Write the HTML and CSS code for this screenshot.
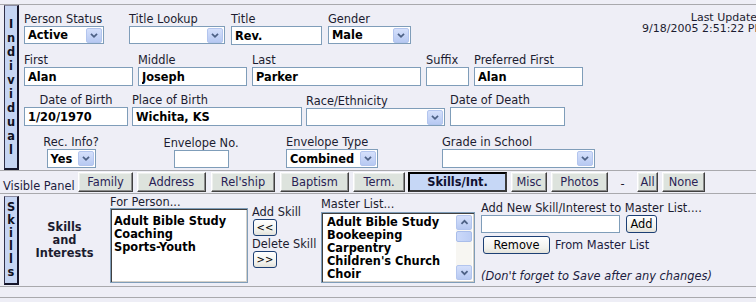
FILE: index.html
```html
<!DOCTYPE html>
<html>
<head>
<meta charset="utf-8">
<title>Individual</title>
<link rel="stylesheet" href="styles.css">
</head>
<body>
<div class="page">
  <div class="rule"></div>

  <section class="panel ind">
    <div class="vtab ind-tab">
      <span>I</span><span>n</span><span>d</span><span>i</span><span>v</span><span>i</span><span>d</span><span>u</span><span>a</span><span>l</span>
    </div>
    <div class="content">
      <div class="row r1">
        <div class="fld c-status">
          <label>Person Status</label>
          <div class="sel sel-status"><span class="val">Active</span><span class="arr"><svg viewBox="0 0 16 15" width="16" height="15"><path d="M4.5 5.5 L8 9 L11.5 5.5" fill="none" stroke="#4d6185" stroke-width="2"/></svg></span></div>
        </div>
        <div class="fld c-tlookup">
          <label>Title Lookup</label>
          <div class="sel sel-tlookup"><span class="val"></span><span class="arr"><svg viewBox="0 0 16 15" width="16" height="15"><path d="M4.5 5.5 L8 9 L11.5 5.5" fill="none" stroke="#4d6185" stroke-width="2"/></svg></span></div>
        </div>
        <div class="fld c-title">
          <label>Title</label>
          <input class="inp inp-title" value="Rev.">
        </div>
        <div class="fld c-gender">
          <label>Gender</label>
          <div class="sel sel-gender"><span class="val">Male</span><span class="arr"><svg viewBox="0 0 16 15" width="16" height="15"><path d="M4.5 5.5 L8 9 L11.5 5.5" fill="none" stroke="#4d6185" stroke-width="2"/></svg></span></div>
        </div>
        <div class="updated">Last Updated<br>9/18/2005 2:51:22 PM</div>
      </div>

      <div class="row r2">
        <div class="fld"><label>First</label><input class="inp inp-first" value="Alan"></div>
        <div class="fld"><label>Middle</label><input class="inp inp-middle" value="Joseph"></div>
        <div class="fld"><label>Last</label><input class="inp inp-last" value="Parker"></div>
        <div class="fld"><label>Suffix</label><input class="inp inp-suffix" value=""></div>
        <div class="fld"><label>Preferred First</label><input class="inp inp-pref" value="Alan"></div>
      </div>

      <div class="row r3">
        <div class="fld center c-dob"><label>Date of Birth</label><input class="inp inp-dob" value="1/20/1970"></div>
        <div class="fld c-pob"><label>Place of Birth</label><input class="inp inp-pob" value="Wichita, KS"></div>
        <div class="fld c-race">
          <label>Race/Ethnicity</label>
          <div class="sel sel-race"><span class="val"></span><span class="arr"><svg viewBox="0 0 16 15" width="16" height="15"><path d="M4.5 5.5 L8 9 L11.5 5.5" fill="none" stroke="#4d6185" stroke-width="2"/></svg></span></div>
        </div>
        <div class="fld"><label>Date of Death</label><input class="inp inp-dod" value=""></div>
      </div>

      <div class="row r4">
        <div class="fld center c-rec">
          <label>Rec. Info?</label>
          <div class="sel sel-rec"><span class="val">Yes</span><span class="arr"><svg viewBox="0 0 16 15" width="16" height="15"><path d="M4.5 5.5 L8 9 L11.5 5.5" fill="none" stroke="#4d6185" stroke-width="2"/></svg></span></div>
        </div>
        <div class="fld center c-env"><label>Envelope No.</label><input class="inp inp-env" value=""></div>
        <div class="fld c-envtype">
          <label>Envelope Type</label>
          <div class="sel sel-envtype"><span class="val">Combined</span><span class="arr"><svg viewBox="0 0 16 15" width="16" height="15"><path d="M4.5 5.5 L8 9 L11.5 5.5" fill="none" stroke="#4d6185" stroke-width="2"/></svg></span></div>
        </div>
        <div class="fld">
          <label>Grade in School</label>
          <div class="sel sel-grade"><span class="val"></span><span class="arr"><svg viewBox="0 0 16 15" width="16" height="15"><path d="M4.5 5.5 L8 9 L11.5 5.5" fill="none" stroke="#4d6185" stroke-width="2"/></svg></span></div>
        </div>
      </div>
    </div>
  </section>

  <div class="rule"></div>

  <nav class="vis-row">
    <span class="vis-label">Visible Panel</span>
    <button class="tbtn b-family">Family</button>
    <button class="tbtn b-address">Address</button>
    <button class="tbtn b-rel">Rel'ship</button>
    <button class="tbtn b-bapt">Baptism</button>
    <button class="tbtn b-term">Term.</button>
    <button class="tbtn active b-skills">Skills/Int.</button>
    <button class="tbtn b-misc">Misc</button>
    <button class="tbtn b-photos">Photos</button>
    <span class="dash">-</span>
    <button class="tbtn b-all">All</button>
    <button class="tbtn b-none">None</button>
  </nav>

  <div class="rule"></div>

  <section class="panel skills">
    <div class="vtab sk-tab">
      <span>S</span><span>k</span><span>i</span><span>l</span><span>l</span><span>s</span>
    </div>
    <div class="sk-title">Skills<br>and<br>Interests</div>
    <div class="sk-col sk-person">
      <label>For Person...</label>
      <div class="listbox lb-person">
        <div>Adult Bible Study</div>
        <div>Coaching</div>
        <div>Sports-Youth</div>
      </div>
    </div>
    <div class="sk-col sk-move">
      <label>Add Skill</label>
      <button class="xbtn mv">&lt;&lt;</button>
      <label>Delete Skill</label>
      <button class="xbtn mv">&gt;&gt;</button>
    </div>
    <div class="sk-col sk-master">
      <label>Master List...</label>
      <div class="listbox lb-master">
        <div class="items">
          <div>Adult Bible Study</div>
          <div>Bookeeping</div>
          <div>Carpentry</div>
          <div>Children's Church</div>
          <div>Choir</div>
        </div>
        <div class="sbar">
          <span class="sb-btn"><svg viewBox="0 0 15 15" width="15" height="15"><path d="M4 9 L7.5 5.5 L11 9" fill="none" stroke="#4d6185" stroke-width="2"/></svg></span>
          <span class="sb-thumb"></span>
          <span class="sb-fill"></span>
          <span class="sb-btn"><svg viewBox="0 0 15 15" width="15" height="15"><path d="M4 6 L7.5 9.5 L11 6" fill="none" stroke="#4d6185" stroke-width="2"/></svg></span>
        </div>
      </div>
    </div>
    <div class="sk-col sk-new">
      <label>Add New Skill/Interest to Master List....</label>
      <div class="new-row">
        <input class="inp inp-new" value="">
        <button class="xbtn add">Add</button>
      </div>
      <div class="rem-row">
        <button class="xbtn rem">Remove</button>
        <span>From Master List</span>
      </div>
      <p class="note">(Don't forget to Save after any changes)</p>
    </div>
  </section>

  <div class="rule"></div>
  <div class="tail"></div>
  <div class="rule"></div>
</div>
</body>
</html>
```

FILE: styles.css
```css
* { box-sizing: border-box; margin: 0; padding: 0; }

html, body { background: #eeeef6; }

body {
  width: 756px;
  height: 302px;
  overflow: hidden;
  font-family: "DejaVu Sans", Verdana, sans-serif;
  font-size: 11.4px;
  color: #1c1c30;
}

.page { width: 780px; padding-top: 4px; }

.rule { height: 1px; background: #a9a9ad; }

/* ---------- panels ---------- */
.panel { display: flex; }

.ind { height: 165px; }

.vtab {
  width: 15px;
  margin-left: 4px;
  background: #c6d5f3;
  border-left: 1px solid #30304a;
  border-top: 1px solid #8a8aa0;
  border-right: 2px solid #15152a;
  border-bottom: 2px solid #15152a;
  display: flex;
  flex-direction: column;
  align-items: center;
  justify-content: center;
  font-weight: bold;
  color: #101020;
}
.ind-tab { height: 165px; line-height: 14px; }
.sk-tab { height: 89px; margin-top: 2px; line-height: 13px; }

.content { margin-left: 5px; flex: 1; }

.row { display: flex; align-items: flex-end; }
.r1 { padding-top: 8px; padding-right: 16px; align-items: flex-start; }
.r1 .fld label { margin-bottom: 1px; }
.r2 { margin-top: 9px; }
.r3 { margin-top: 8px; }
.r4 { margin-top: 10px; }

.fld { display: flex; flex-direction: column; margin-right: 5px; }
.fld label { line-height: 12px; height: 12px; margin-bottom: 0; white-space: nowrap; }
.fld.center { align-items: center; }
.r2 .fld label, .r3 .fld label, .r4 .fld label { margin-bottom: 1px; }

.c-status { width: 100px; }
.c-tlookup { width: 97px; }
.c-title { width: 92px; }
.c-gender { width: 84px; }

.c-dob { width: 104px; margin-right: 4px; }
.c-pob { width: 170px; margin-right: 4px; }
.c-race { width: 139px; }

.c-rec { width: 94px; margin-right: 0; }
.c-env { width: 166px; margin-right: 2px; }
.c-envtype { width: 151px; }

/* inputs */
.inp {
  display: block;
  height: 19px;
  border: 1px solid #7f9db9;
  background: #fff;
  font: bold 11.4px "DejaVu Sans", Verdana, sans-serif;
  color: #000;
  padding: 0 3px;
  outline: none;
}
.inp-title { width: 91px; }
.inp-first { width: 109px; }
.inp-middle { width: 109px; }
.inp-last { width: 169px; }
.inp-suffix { width: 43px; }
.inp-pref { width: 109px; }
.inp-dob { width: 104px; }
.inp-pob { width: 170px; }
.inp-dod { width: 115px; }
.inp-env { width: 55px; height: 18px; }
.inp-new { width: 139px; height: 18px; }

/* select look-alikes */
.sel {
  height: 18px;
  border: 1px solid #7f9db9;
  background: #fff;
  display: flex;
  align-items: center;
  justify-content: space-between;
  padding: 0 1px 0 3px;
  font-weight: bold;
  color: #000;
}
.r4 .sel { height: 19px; }
.sel .val { white-space: nowrap; }
.arr {
  width: 16px;
  height: 15px;
  background: linear-gradient(#d5e0fb, #b7c9f2);
  border: 1px solid #b3c5ee;
  border-radius: 2px;
  display: flex;
  align-items: center;
  justify-content: center;
}
.arr svg { display: block; width: 14px; height: 13px; }
.sel-status { width: 80px; }
.sel-tlookup { width: 96px; }
.sel-gender { width: 83px; }
.sel-race { width: 139px; }
.sel-rec { width: 49px; }
.sel-envtype { width: 92px; }
.sel-grade { width: 153px; }

.updated {
  margin-left: auto;
  margin-top: -1px;
  text-align: right;
  font-size: 11px;
  line-height: 11px;
  white-space: nowrap;
}

/* ---------- visible panel row ---------- */
.vis-row {
  height: 22px;
  display: flex;
  align-items: flex-start;
  padding-top: 1px;
}
.vis-label {
  margin-left: 3px;
  margin-top: 7px;
  width: 71px;
  white-space: nowrap;
  color: #1c1c40;
}
.tbtn {
  height: 20px;
  margin-left: 4px;
  background: #dde3dd;
  border-top: 1px solid #ffffff;
  border-left: 1px solid #ffffff;
  border-right: 1px solid #404040;
  border-bottom: 1px solid #404040;
  box-shadow: inset -1px -1px 0 #8c8c8c, inset 1px 1px 0 #eef0ee;
  font: 11.4px "DejaVu Sans", Verdana, sans-serif;
  color: #2a1f55;
  padding: 0;
  text-align: center;
}
.tbtn.active {
  background: #c6d7f6;
  border: 2px solid #000;
  border-right-color: #3a3a3a;
  border-bottom-color: #3a3a3a;
  box-shadow: none;
  font-weight: bold;
  color: #101030;
}
.b-family { width: 55px; }
.b-address { width: 69px; }
.b-rel { width: 64px; margin-left: 5px; }
.b-bapt { width: 69px; margin-left: 5px; }
.b-term { width: 52px; }
.b-skills { width: 99px; margin-left: 3px; }
.b-misc { width: 36px; }
.b-photos { width: 57px; }
.dash { width: 29px; text-align: center; margin-top: 5px; }
.b-all { width: 21px; margin-left: 0; }
.b-none { width: 43px; }

/* ---------- skills panel ---------- */
.skills { height: 92px; align-items: flex-start; }

.sk-title {
  width: 91px;
  margin-top: 27px;
  text-align: center;
  font-weight: bold;
  line-height: 13px;
}

.sk-col { display: flex; flex-direction: column; }
.sk-col label { line-height: 12px; white-space: nowrap; }

.sk-person { width: 142px; padding-top: 2px; }
.sk-move { width: 69px; padding-top: 12px; }
.sk-master { width: 160px; padding-top: 4px; }
.sk-new { padding-top: 8px; }

.listbox {
  background: #fff;
  border: 1px solid #7f9db9;
  box-shadow: inset 1px 1px 0 #404040, inset -1px -1px 0 #d4d0c8;
  font-weight: bold;
  color: #000;
  line-height: 13px;
}
.lb-person { width: 138px; height: 75px; padding: 6px 3px; margin-top: 0; }
.lb-master {
  width: 154px;
  height: 71px;
  margin-top: 2px;
  display: flex;
  padding: 2px 2px 2px 2px;
}
.lb-master .items { flex: 1; padding: 1px 0 0 3px; overflow: hidden; white-space: nowrap; }
.sbar {
  width: 16px;
  display: flex;
  flex-direction: column;
  background: #f7f6f2;
  margin-right: 0;
}
.sb-btn {
  width: 16px;
  height: 15px;
  background: linear-gradient(#d5e0fb, #b7c9f2);
  border: 1px solid #b3c5ee;
  border-radius: 2px;
  display: flex;
  align-items: center;
  justify-content: center;
}
.sb-btn svg { width: 13px; height: 13px; display: block; }
.sb-thumb {
  height: 11px;
  margin-top: 1px;
  background: linear-gradient(90deg, #cbd9fa, #bccdf4);
  border: 1px solid #a9bdea;
  border-radius: 2px;
}
.sb-fill { flex: 1; }

.xbtn {
  font: 11.4px "DejaVu Sans", Verdana, sans-serif;
  color: #000;
  background: linear-gradient(#ffffff, #f1f1ec 70%, #e3e2da);
  border: 1px solid #1c3f74;
  border-radius: 3px;
  padding: 0;
}
.mv { width: 24px; height: 17px; margin-left: 1px; font-size: 10px; margin-top: 1px; margin-bottom: 2px; }

.new-row { display: flex; margin-top: 1px; }
.add { width: 31px; height: 18px; margin-left: 6px; }
.rem-row { display: flex; align-items: center; margin-top: 3px; margin-left: 2px; }
.rem { width: 67px; height: 18px; margin-right: 5px; }
.rem-row span { color: #1c1c40; }
.note { font-style: italic; margin-top: 15px; color: #1c1c40; white-space: nowrap; }

.tail { height: 10px; }
```
